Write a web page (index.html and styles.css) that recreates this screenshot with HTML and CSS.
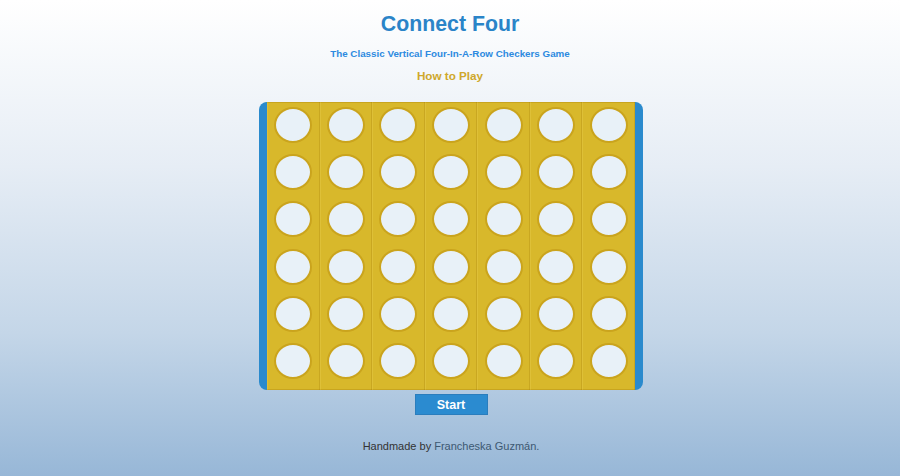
FILE: index.html
```html
<!DOCTYPE html>
<html lang="en">
<head>
<meta charset="utf-8">
<title>Connect Four</title>
<link rel="stylesheet" href="styles.css">
</head>
<body>
<main class="page">
  <h1 class="title">Connect Four</h1>
  <p class="subtitle">The Classic Vertical Four-In-A-Row Checkers Game</p>
  <a class="howto" href="#">How to Play</a>
  <div class="board">
    <div class="col"><span class="hole"></span><span class="hole"></span><span class="hole"></span><span class="hole"></span><span class="hole"></span><span class="hole"></span></div>
    <div class="col"><span class="hole"></span><span class="hole"></span><span class="hole"></span><span class="hole"></span><span class="hole"></span><span class="hole"></span></div>
    <div class="col"><span class="hole"></span><span class="hole"></span><span class="hole"></span><span class="hole"></span><span class="hole"></span><span class="hole"></span></div>
    <div class="col"><span class="hole"></span><span class="hole"></span><span class="hole"></span><span class="hole"></span><span class="hole"></span><span class="hole"></span></div>
    <div class="col"><span class="hole"></span><span class="hole"></span><span class="hole"></span><span class="hole"></span><span class="hole"></span><span class="hole"></span></div>
    <div class="col"><span class="hole"></span><span class="hole"></span><span class="hole"></span><span class="hole"></span><span class="hole"></span><span class="hole"></span></div>
    <div class="col"><span class="hole"></span><span class="hole"></span><span class="hole"></span><span class="hole"></span><span class="hole"></span><span class="hole"></span></div>
  </div>
  <button class="start" type="button">Start</button>
  <p class="footer">Handmade by <a class="author" href="#">Francheska Guzmán.</a></p>
</main>
</body>
</html>
```

FILE: styles.css
```css
html, body {
  margin: 0;
  padding: 0;
}

body {
  width: 900px;
  height: 476px;
  overflow: hidden;
  background: linear-gradient(to bottom, #ffffff 0%, #e6edf5 35%, #c4d6e8 70%, #97b7d7 100%);
  font-family: "Liberation Sans", Arial, sans-serif;
}

.page {
  display: flex;
  flex-direction: column;
  align-items: center;
}

.title {
  margin: 12px 0 0;
  font-size: 21.3px;
  line-height: 24px;
  font-weight: bold;
  color: #2a84c8;
}

.subtitle {
  margin: 11px 0 0;
  font-size: 9.8px;
  line-height: 14px;
  font-weight: bold;
  color: #2d8ae0;
}

.howto {
  margin-top: 7px;
  font-size: 11.7px;
  line-height: 16px;
  font-weight: bold;
  color: #cfa82b;
  text-decoration: none;
}

.board {
  margin: 18px 0 0 2px;
  width: 368px;
  height: 288px;
  display: grid;
  grid-template-columns: repeat(7, 1fr);
  background: #d8b82b;
  border-left: 8px solid #2a8acd;
  border-right: 8px solid #2a8acd;
  border-radius: 8px;
  box-shadow: inset 0 1px 0 #c8a51f, inset 0 -1px 0 #c8a51f;
}

.col {
  display: flex;
  flex-direction: column;
  align-items: center;
  gap: 11.2px;
  padding-top: 5px;
  border-left: 1px solid rgba(255, 235, 130, 0.15);
  border-right: 1px solid rgba(150, 110, 0, 0.22);
}

.hole {
  display: block;
  box-sizing: border-box;
  width: 38px;
  height: 36px;
  border-radius: 50%;
  background: #e8f1f8;
  border: 2px solid #caa41d;
}

.start {
  margin: 4px 0 0 2px;
  width: 73px;
  height: 21px;
  padding: 0;
  background: #2b8bd0;
  border: 1px solid #2a7dbd;
  color: #ffffff;
  font-family: "Liberation Sans", Arial, sans-serif;
  font-size: 12.5px;
  font-weight: bold;
}

.footer {
  margin: 23px 0 0 2px;
  font-size: 11px;
  line-height: 16px;
  color: #333333;
}

.author {
  color: #3d5872;
  text-decoration: none;
}
```
